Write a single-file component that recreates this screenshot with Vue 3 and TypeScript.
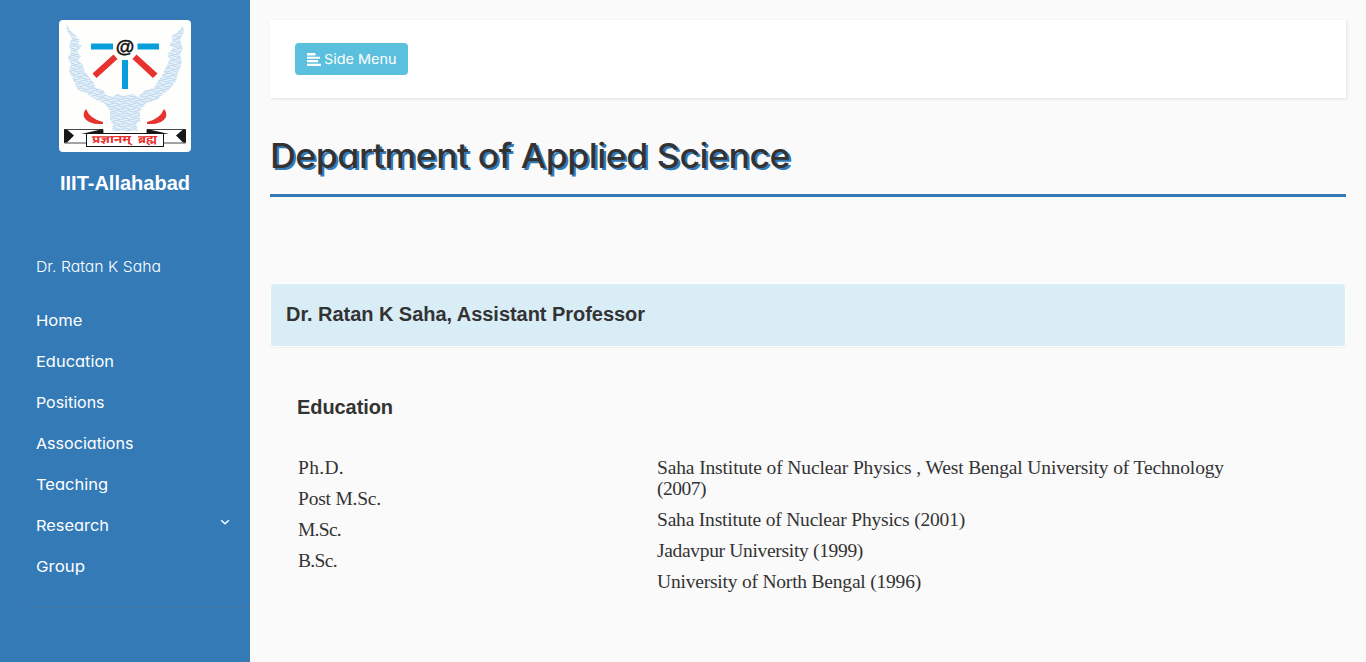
<script setup lang="ts">
interface NavItem { label: string; width: number; expandable?: boolean }

const navItems: NavItem[] = [
  { label: 'Home', width: 46.5 },
  { label: 'Education', width: 78 },
  { label: 'Positions', width: 68.5 },
  { label: 'Associations', width: 97.5 },
  { label: 'Teaching', width: 72 },
  { label: 'Research', width: 73 },
  { label: 'Group', width: 49 },
]
navItems[5].expandable = true

const degrees = [
  { label: 'Ph.D.', width: 46 },
  { label: 'Post M.Sc.', width: 83 },
  { label: 'M.Sc.', width: 43 },
  { label: 'B.Sc.', width: 39 },
]

const institutes = [
  [
    { label: 'Saha Institute of Nuclear Physics , West Bengal University of Technology', width: 567 },
    { label: '(2007)', width: 49 },
  ],
  [{ label: 'Saha Institute of Nuclear Physics (2001)', width: 308 }],
  [{ label: 'Jadavpur University (1999)', width: 206 }],
  [{ label: 'University of North Bengal (1996)', width: 264 }],
]

// Makes a line of text span the given width, by tracking or, with .stretch, by widening its letters.
const vFit = {
  mounted(el: HTMLElement, binding: { value: number; modifiers: Record<string, boolean> }) {
    const natural = el.getBoundingClientRect().width
    if (binding.modifiers.stretch) {
      el.style.transform = `scaleX(${binding.value / natural})`
      return
    }
    const count = (el.textContent ?? '').length
    el.style.letterSpacing = `${(binding.value - natural) / count}px`
  },
}
</script>

<template>
  <div class="wrapper">
    <aside class="sidebar">
      <div class="brand">
        <svg class="logo" viewBox="0 0 132 132">
          <defs>
            <pattern id="ripples" width="11" height="5" patternUnits="userSpaceOnUse">
              <rect width="11" height="5" fill="#e6f0f9" />
              <path d="M0 1.200q2.700-2 5.500 0t5.500 0M-2 3.800q2.700-2 5.500 0t5.500 0t5.500 0" fill="none" stroke="#acceea" stroke-width=".8" />
            </pattern>
          </defs>
          <rect width="132" height="132" rx="4" fill="#fefefd" />
          <path
            d="M7.500 5Q12 12 16 15L21 20L19 24L23 25L18 32L22 36L19 40L24 45L25 50L30 57L34 62L37 68L44 70L47 75L54 77L58 74L66 76L74 74L79 77L86 70L95 68L99 61L103 56L107 47L111 39L108 35L114 28L110 25L114 20L112 16L118 13L124 5L125 12L121 20L124 28L121 34L123 43L119 53L117 61L110 70L104 74L98 80L87 83L81 91L81 101L77 104L79 111L53 111L54 104L51 100L51 91L45 83L38 80L28 74L19 70L15 62L10 51L12 44L9 38L12 31L10 25L13 18L8 11Z"
            fill="url(#ripples)"
          />
          <path d="M32 23.500h22v6H32zM78.500 23.500H100v6H78.500zM63 40h6v29h-6z" fill="#079fdb" />
          <path d="M54.500 34.500l4 4.500-21 19-4-4.500zM77.500 34.500l-4 4.500L94 58l4.500-4.500z" fill="#e8322e" />
          <text x="66" y="32.500" text-anchor="middle" class="at-sign">@</text>
          <path d="M27 89q4 10 17 13v2q-15 1-19-7-1-5 2-8zM105 89q-4 10-17 13v2q15 1 19-7 1-5-2-8z" fill="#e8322e" />
          <path d="M5.500 109.500H44V123H5.500zM126.500 109.500H88V123h38.500z" fill="#fff" stroke="#171717" stroke-width=".8" />
          <path d="M5 109.500h3l7 6-7 7H5zM127 109.500h-3l-7 6 7 7h3zM22 114l22-5v5zM110 114l-22-5v5z" fill="#171717" />
          <rect x="27.500" y="113.500" width="77" height="13" fill="#fff" stroke="#171717" />
          <text x="33" y="123" textLength="39" lengthAdjust="spacingAndGlyphs" class="motto">प्रज्ञानम्</text>
          <text x="79" y="123" textLength="19" lengthAdjust="spacingAndGlyphs" class="motto">ब्रह्म</text>
        </svg>
        <h3><span v-fit="130">IIIT-Allahabad</span></h3>
      </div>
      <nav>
        <p class="owner"><span v-fit.stretch="125">Dr. Ratan K Saha</span></p>
        <ul>
          <li v-for="item in navItems" :key="item.label">
            <a><span v-fit.stretch="item.width">{{ item.label }}</span></a>
            <svg v-if="item.expandable" class="caret" viewBox="0 0 10 7"><path d="M1.200 1.200L5 4.800l3.800-3.600" /></svg>
          </li>
        </ul>
      </nav>
    </aside>

    <main>
      <header class="topbar">
        <button type="button">
          <svg viewBox="0 0 14 13"><path d="M0 0h8.500v2.500H0zM0 3.800h13v2H0zM0 7h11v2.300H0zM0 10.700h14V13H0z" /></svg>
          <span v-fit.stretch="72.5">Side Menu</span>
        </button>
      </header>
      <h1><span v-fit.stretch="520">Department of Applied Science</span></h1>
      <section class="panel"><h2><span v-fit="359">Dr. Ratan K Saha, Assistant Professor</span></h2></section>
      <section class="education">
        <h2><span v-fit="96">Education</span></h2>
        <div class="columns">
          <div class="degrees">
            <p v-for="degree in degrees" :key="degree.label"><span v-fit="degree.width">{{ degree.label }}</span></p>
          </div>
          <div class="institutes">
            <p v-for="(lines, index) in institutes" :key="index">
              <template v-for="line in lines" :key="line.label"><span v-fit="line.width">{{ line.label }}</span><br></template>
            </p>
          </div>
        </div>
      </section>
    </main>
  </div>
</template>

<style>
body { background: #fafafa; overflow: hidden; }
</style>

<style scoped>
* { box-sizing: border-box; }
h1, h2, h3, p, ul { margin: 0; padding: 0; }
span { white-space: nowrap; }
h1 span, .owner span, li span, button span { display: inline-block; transform-origin: left center; }
.wrapper { display: flex; height: 662px; color: #333; font-family: Inter, "Open Sans", sans-serif; font-feature-settings: "cv11"; }
.sidebar { width: 250px; flex: none; background: #337ab7; color: #fff; }
.brand { height: 248px; padding-top: 20px; display: flex; flex-direction: column; align-items: center; }
.logo { width: 132px; height: 132px; display: block; }
.at-sign { font: bold 19px "Liberation Sans", Arial, sans-serif; fill: #111; stroke: #111; stroke-width: .4; }
.motto { font: bold 11px "Noto Sans Devanagari", "Noto Sans", sans-serif; fill: #e8322e; }
.brand h3 { margin-top: 19px; font: bold 20px/24px "Liberation Sans", Arial, sans-serif; }
nav { margin-left: 26px; height: 360px; border-bottom: 1px solid #4177a4; }
nav .owner { padding-left: 10px; height: 52px; font-size: 15px; line-height: 38px; font-weight: 300; }
nav ul { list-style: none; }
nav li { height: 41px; padding: 0 20px 0 10px; display: flex; justify-content: space-between; align-items: center; font-size: 15px; line-height: 41px; font-weight: 400; }
.caret { width: 10px; height: 7px; margin-bottom: 7px; fill: none; stroke: #fff; stroke-width: 1.500; }
main { flex: 1; padding: 20px 20px 0; }
.topbar { height: 78px; background: #fff; padding: 23px 25px; box-shadow: 1px 1px 3px rgba(0, 0, 0, .1); }
button { width: 113px; height: 32px; border: 0; border-radius: 4px; background: #5bc0de; color: #fff; padding: 0 12px; display: flex; align-items: center; gap: 3px; font-family: inherit; font-feature-settings: inherit; font-size: 13.500px; }
button svg { width: 14px; height: 13px; flex: none; fill: #fff; }
h1 { height: 99px; padding-top: 38px; border-bottom: 3px solid #337ab7; font-size: 34px; line-height: 40px; font-weight: 500; letter-spacing: -.5px; text-shadow: 2px 2px #337ab7; }
.panel { height: 64px; margin-top: 86px; padding: 18px 15px; background: #d9edf7; border: 1px solid #fff; border-radius: 4px; box-shadow: 0 1px 1px rgba(0, 0, 0, .05); }
h2 { font: bold 20px/24px "Liberation Sans", Arial, sans-serif; }
.education { padding: 48px 27px 0; }
.columns { display: flex; margin-top: 38px; font: 19.500px/21px "Liberation Serif", "Times New Roman", serif; }
.columns p { margin-bottom: 10px; }
.degrees { width: 360px; padding-left: 1px; }
.institutes { flex: 1; }
</style>
